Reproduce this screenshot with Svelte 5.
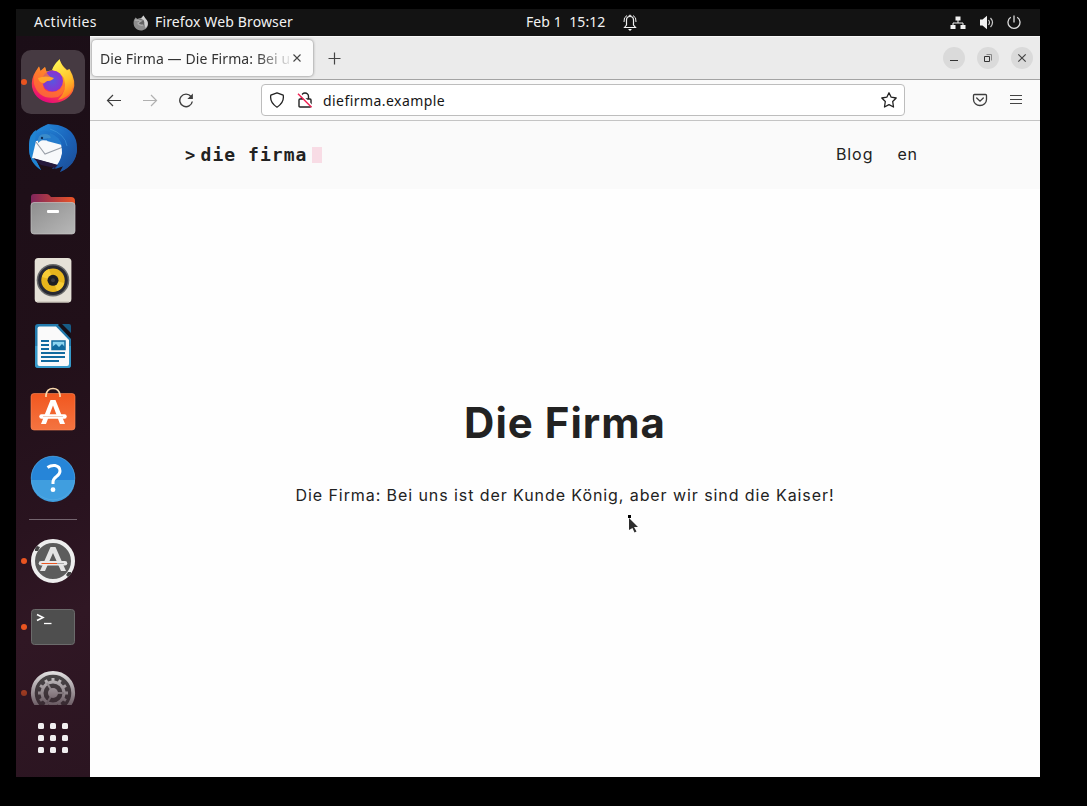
<script>
  const gearTeeth = Array.from({ length: 12 }, (_, i) => i * 30);
  const grid = Array.from({ length: 9 }, (_, i) => i);
</script>

<div class="screen">
  <div class="desktop">
    <header class="topbar">
      <span class="activities">Activities</span>
      <svg class="mini" width="16" height="16" viewBox="0 0 16 16">
        <path d="M1 5 2.500 2.500 4.500 4C6 3 7 3 8 3L10.500.5 12 3 14 5.500C17 12 12 15.500 8 15.500 2 15.500-.5 10 1 5Z" fill="#8d8d8d" />
        <path d="M8 4 10.500.5 12 3 14 5.500C16 9 14 12 12.500 13L11 7Z" fill="#d0d0d0" />
        <circle cx="8" cy="7.500" r="3.200" fill="#636363" />
        <path d="M2 5 8 6 5 8Q6 11 10 10" stroke="#aaa" stroke-width="1.500" fill="none" />
      </svg>
      <span class="appname">Firefox Web Browser</span>
      <span class="clock">Feb 1&nbsp; 15:12</span>
      <svg class="bell" width="16" height="18" viewBox="0 0 16 18" fill="none" stroke="#f2f2f2">
        <path d="M2.500 13.500 4.500 11V6Q4.500 2.500 8 2.500T11.500 6V11L13.500 13.500Z" stroke-width="1.200" />
        <path d="M2 8Q1.500 3 5 1.500M14 8Q14.500 3 11 1.500M6.500 2 8 1 9.500 2" stroke-width="1" />
        <path d="M6 15H10L8 17Z" fill="#fff" stroke="none" />
      </svg>
      <svg class="net" width="16" height="16" viewBox="0 0 16 16">
        <path d="M5.500 1.500h5v4h-5zM.5 10h5v4h-5zM10.500 10h5v4h-5z" fill="#f2f2f2" />
        <path d="M8 5v3M3 10.500V8h10V10.500" fill="none" stroke="#f2f2f2" />
      </svg>
      <svg class="vol" width="16" height="16" viewBox="0 0 16 16">
        <path d="M1 4.500h2.500L8 .8v13.500l-4.500-3.800H1Z" fill="#f2f2f2" />
        <path d="M9.500 5Q11.500 7.500 9.500 10M11.500 3Q15.500 7.500 11.500 12" fill="none" stroke="#ccc" stroke-width="1.200" />
      </svg>
      <svg class="power" width="16" height="16" viewBox="0 0 16 16" fill="none" stroke="#ddd" stroke-width="1.300">
        <path d="M4.800 2.300A6 6 0 1 0 11.200 2.300M8 .5v7" />
      </svg>
    </header>

    <div class="workspace">
      <nav class="dock">
        <div class="tile active">
          <svg viewBox="0 0 64 64">
            <defs>
              <linearGradient id="fire" x1=".8" y1="0" x2=".35" y2="1">
                <stop offset="0" stop-color="#fff04a" /><stop offset=".38" stop-color="#ff9c22" />
                <stop offset=".68" stop-color="#ff463f" /><stop offset="1" stop-color="#e4087d" />
              </linearGradient>
              <linearGradient id="flame" x1=".4" y1="0" x2=".7" y2="1">
                <stop offset="0" stop-color="#fff552" /><stop offset=".55" stop-color="#ffc22a" /><stop offset="1" stop-color="#ff711f" />
              </linearGradient>
              <radialGradient id="globe"><stop offset="0" stop-color="#5857df" /><stop offset="1" stop-color="#8b31cf" /></radialGradient>
            </defs>
            <path d="M15 21 18 16.500 19.500 21 24 17 25.500 21.500Q30 20 32 20.500L38.500 9Q40 15 46 20L48.500 19Q56 32 52 41C44 58 15 57 11 37Q10 28 15 21Z" fill="url(#fire)" />
            <path d="M31 20Q33 14 38.500 9.500 40 16 46 21L48 20Q55 32 50 42 46 48 37 50 47 40 43 28 39 22 31 20Z" fill="url(#flame)" />
            <ellipse cx="31.500" cy="31" rx="10.500" ry="10.500" fill="url(#globe)" />
            <path d="M15 21 18 16.500 19.500 21 24 17 25.500 22Q27 26 32 28 31 31 26 31L22 34Q22 42 31 42 39 42 42 35 46 41 37 47 18 51 13 34Q12 26 15 21Z" fill="#ff7d2c" opacity=".72" />
            <path d="M17 28Q25 25 33 28 31 31 26 31L23 33Q18 33 17 28Z" fill="#ffa52b" />
          </svg>
          <i class="dot"></i>
        </div>

        <div class="tile">
          <svg viewBox="0 0 64 64">
            <defs><linearGradient id="bird" x1="0" y1="0" x2="1" y2="1">
              <stop offset="0" stop-color="#248bdb" /><stop offset=".5" stop-color="#1b66bd" /><stop offset="1" stop-color="#1c4990" />
            </linearGradient></defs>
            <path d="M27 8 37 9Q56 14 56 32 56 48 39 56L42 50 31 53Q34 50 34 48L14 43 20 54Q8 46 8 32 8 16 23 10Z" fill="url(#bird)" />
            <path d="M8 29Q8 18 15 14L13 40 20 54Q7 46 8 29Z" fill="#2084d2" />
            <path d="M15 25Q25 23 41 27L42 34Q40 44 36 49L11 42Z" fill="#f8f9fb" />
            <path d="M15 26 24 38 42 31" fill="none" stroke="#999fa8" stroke-width="1.100" />
            <path d="M12 42 37 49 34 52 20 49Z" fill="#25183b" />
            <path d="M16 17Q22 12 29 16 41 20 41 37 40 47 34 53L43 50 39 56Q56 49 56 32 51 38 52 27 49 32 49 19 37 9 26 9Q18 12 16 17Z" fill="url(#bird)" />
            <path d="M29 17Q38 20 41 29L26 25Z" fill="#247bcc" />
            <path d="M17 27Q16 18 24 18 29 18 30 22L22 23Z" fill="#3b8ccb" />
            <circle cx="21" cy="22" r="1.200" fill="#102c54" />
            <path d="M29 13Q44 18 46 30" fill="none" stroke="#47a1e1" stroke-width="1" opacity=".5" />
          </svg>
        </div>

        <div class="tile">
          <svg viewBox="0 0 64 64">
            <defs>
              <linearGradient id="folder"><stop offset="0" stop-color="#80255b" /><stop offset="1" stop-color="#eb5526" /></linearGradient>
              <linearGradient id="drawer" x1="0" y1="0" x2="1" y2="1"><stop offset="0" stop-color="#8e8e8e" /><stop offset="1" stop-color="#b8b8b8" /></linearGradient>
            </defs>
            <path d="M10 28V15q0-3 3-3h13q2 0 4 3h20q4 0 4 4v9Z" fill="url(#folder)" />
            <rect x="10" y="20.500" width="44" height="31.500" rx="3" fill="url(#drawer)" stroke="#c4c4c4" stroke-width=".7" />
            <rect x="26" y="28" width="12" height="3" rx="1" fill="#fff" />
          </svg>
        </div>

        <div class="tile">
          <svg viewBox="0 0 64 64">
            <rect x="13.700" y="10" width="36.700" height="44.500" rx="3.500" fill="#e5e1d7" />
            <path d="M16 54H48" stroke="#beb9ae" />
            <circle cx="32" cy="32.300" r="16.300" fill="#686969" /><circle cx="32" cy="32.300" r="14.800" fill="#272933" />
            <circle cx="32" cy="32.300" r="11.700" fill="#e7b51c" />
            <path d="M32 32 21 29Q22 23 28 21ZM32 32 43 35Q42 41 36 43Z" fill="#f6cc36" />
            <circle cx="32" cy="32.300" r="5.500" fill="#1d1e22" /><circle cx="32" cy="32.300" r="2" fill="#38393f" />
          </svg>
        </div>

        <div class="tile">
          <svg viewBox="0 0 64 64">
            <path d="M17 10h20l13 14v27q0 3-3 3H17q-3 0-3-3V13q0-3 3-3Z" fill="#237bad" />
            <path d="M14 32H50V51q0 3-3 3H17q-3 0-3-3Z" fill="#369aca" />
            <path d="M18.500 12.500H35L48 26V50q0 2-2 2H18.500q-2 0-2-2V14.500q0-2 2-2Z" fill="#fafafa" />
            <path d="M37 11 50 25V20L41 10Z" fill="#161018" /><path d="M41 10H48q2 0 2 2v7Z" fill="#175c86" />
            <path d="M20 27h8M20 31h8M20 35h8M20 39h24M20 43h24M20 47h18" stroke="#126b9f" stroke-width="2" />
            <rect x="31" y="27" width="13" height="8.500" fill="#8dd5f1" stroke="#126b9f" stroke-width="1.500" />
            <path d="M31 35V33L35 30 38 33 41 30 44 33V35Z" fill="#126b9f" />
          </svg>
        </div>

        <div class="tile">
          <svg viewBox="0 0 64 64">
            <defs><linearGradient id="bag" x1="0" y1="0" x2="0" y2="1"><stop offset="0" stop-color="#f1571f" /><stop offset="1" stop-color="#f47441" /></linearGradient></defs>
            <rect x="10" y="13.500" width="44" height="36.500" rx="3" fill="url(#bag)" stroke="#ff8a58" stroke-width=".6" />
            <path d="M25 17V15q1-6.500 7-6.500t7 6.500v2" fill="none" stroke="#fbd9ad" stroke-width="1.700" />
            <path d="M20 44 29.500 20H34.500L44 44H39L32 25.500 25 44Z" fill="#fff" />
            <path d="M20.500 36.500H43.500" stroke="#fff" stroke-width="4.500" stroke-linecap="round" /><path d="M22 36.500H42" stroke="#f3cdbb" stroke-width="1" />
          </svg>
        </div>

        <div class="tile">
          <svg viewBox="0 0 64 64">
            <circle cx="32" cy="32" r="22" fill="#2685d8" /><path d="M10 34H54A22 22 0 0 1 10 34Z" fill="#409edf" />
            <circle cx="32" cy="32" r="21.800" fill="none" stroke="#59ade3" stroke-width=".6" />
            <path d="M26.500 21.500Q30 19 34 19.500q5 1 5 5.500 0 3-3.500 5.500Q32 33 32 36v2" fill="none" stroke="#fff" stroke-width="3" />
            <circle cx="32" cy="43.700" r="2.400" fill="#fff" />
          </svg>
        </div>

        <hr />

        <div class="tile">
          <svg viewBox="0 0 64 64">
            <circle cx="32" cy="32" r="20" fill="#5c5c5c" stroke="#eee" stroke-width="4" />
            <path d="M14 20l2-3 3 1-2 4-3 0ZM47 43h3v2l-3 3-2-2Z" fill="#454545" />
            <path d="M19 42 29.500 18H34.500L45 42H40L32 24 24 42Z" fill="#e4e4e4" />
            <path d="M20 34.300H44" stroke="#e8e8e8" stroke-width="4.500" stroke-linecap="round" /><path d="M20.500 34.500H36" stroke="#e95420" stroke-width="1" /><path d="M36 34.500h7" stroke="#aaa" />
          </svg>
          <i class="dot"></i>
        </div>

        <div class="tile">
          <svg viewBox="0 0 64 64">
            <rect x="10.500" y="14.500" width="43" height="35" rx="3" fill="#4e4e4e" stroke="#6b6b6b" />
            <path d="M16 19.500 22 22.500 16 25.500" fill="none" stroke="#fff" stroke-width="1.600" /><path d="M23 28.500H30.500" stroke="#fff" stroke-width="1.300" />
          </svg>
          <i class="dot"></i>
        </div>

        <div class="tile cut">
          <svg viewBox="0 0 64 64">
            <circle cx="32" cy="32" r="20.200" fill="#4c4c4c" stroke="#e8e8e8" stroke-width="3.800" />
            <circle cx="32" cy="32" r="11" fill="none" stroke="#d8d8d8" stroke-width="3" />
            {#each gearTeeth as angle}
              <rect x="30.500" y="17" width="3" height="4" fill="#d8d8d8" transform="rotate({angle} 32 32)" />
            {/each}
            <path d="M32 32 26 22M32 32H43M32 32 26 42" stroke="#bbb" stroke-width="2" />
            <circle cx="32" cy="32" r="5" fill="#d2ced0" />
          </svg>
          <i class="dot"></i>
        </div>

        <div class="apps">{#each grid as cell (cell)}<i></i>{/each}</div>
      </nav>

      <section class="browser">
        <div class="tabs">
          <div class="tab">
            <span class="title">Die Firma — Die Firma: Bei u</span>
            <svg width="8" height="8" viewBox="0 0 8 8"><path d="M.5.5 7.500 7.500M7.500.5.5 7.500" stroke="#444" stroke-width="1.100" /></svg>
          </div>
          <svg class="plus" width="13" height="13" viewBox="0 0 13 13"><path d="M6.500.5v12M.5 6.500h12" stroke="#444" stroke-width="1.200" /></svg>
          <div class="controls">
            <span><svg viewBox="0 0 22 22"><path d="M7 13.500h8" stroke="#333" /></svg></span>
            <span><svg viewBox="0 0 22 22" fill="none"><path d="M9.500 7.500h5v6" stroke="#888" /><path d="M7.500 9.500h5v5h-5z" stroke="#333" /></svg></span>
            <span><svg viewBox="0 0 22 22"><path d="M7.300 7.300 14.700 14.700M14.700 7.300 7.300 14.700" stroke="#444" stroke-width="1.200" /></svg></span>
          </div>
        </div>

        <div class="toolbar">
          <svg class="back" width="16" height="16" viewBox="0 0 16 16" fill="none" stroke="#3d3d3d" stroke-width="1.200"><path d="M15 8.500H1.500M7 3 1.500 8.500 7 14" /></svg>
          <svg class="forward" width="16" height="16" viewBox="0 0 16 16" fill="none" stroke="#b0b0b0" stroke-width="1.200"><path d="M1 8.500h13.500M9 3 14.500 8.500 9 14" /></svg>
          <svg class="reload" width="16" height="16" viewBox="0 0 16 16" fill="none" stroke="#3d3d3d" stroke-width="1.400"><path d="M13 4.500A6.300 6.300 0 1 0 14.300 9.500" /><path d="M14.900 1.500v5.500H9.400Z" fill="#3d3d3d" stroke="none" /></svg>
          <div class="address">
            <svg width="16" height="16" viewBox="0 0 16 16" fill="none" stroke="#222" stroke-width="1.300"><path d="M8 .8 14.200 3.200Q15.500 10.500 8 15.200.5 10.500 1.800 3.200Z" stroke-linejoin="round" /></svg>
            <svg class="lock" width="16" height="16" viewBox="0 0 16 16" fill="none"><path d="M4.500 7V4.500a3.500 3.500 0 0 1 7 0V7M3 7h10q1 0 1 1v6q0 1-1 1H3q-1 0-1-1V8q0-1 1-1Z" stroke="#222" stroke-width="1.400" /><path d="M2.500 1.500 15 14" stroke="#fff" stroke-width="2" /><path d="M1 1.700 14.500 15.200" stroke="#f02052" stroke-width="1.400" /></svg>
            <span>diefirma.example</span>
            <svg class="star" width="16" height="16" viewBox="0 0 16 16" fill="none" stroke="#222" stroke-width="1.300" stroke-linejoin="round"><path d="M8 .8 10.200 5.200 15.200 6 11.700 9.500 12.500 15 8 12.600 3.500 15 4.300 9.500.8 6 5.800 5.200Z" /></svg>
          </div>
          <svg class="pocket" width="16" height="16" viewBox="0 0 16 16" fill="none" stroke="#3d3d3d" stroke-width="1.300"><path d="M2.500 2.500h11q1 0 1 1V7.500a6.500 6 0 0 1-13 0v-4q0-1 1-1Z" /><path d="M4.700 6 8 9.200 11.300 6" stroke-linecap="round" /></svg>
          <svg class="menu" width="12" height="12" viewBox="0 0 12 12"><path d="M0 1.500h12M0 5.500h12M0 9.500h12" stroke="#444" stroke-width="1.200" /></svg>
        </div>

        <div class="site-head">
          <div class="brand"><span class="prompt">&gt;</span><span class="name">die firma</span><i></i></div>
          <nav class="links"><span>Blog</span><span>en</span></nav>
        </div>
        <main>
          <h1>Die Firma</h1>
          <p>Die Firma: Bei uns ist der Kunde König, aber wir sind die Kaiser!</p>
          <svg class="pointer" width="12" height="20" viewBox="0 0 12 20"><path d="M1 4 10 13 6 13 8.500 17.500 6.500 18.500 4.500 14 1 16Z" fill="#2d2d2d" /><path d="M0 1h3v3H0Z" fill="#000" /></svg>
        </main>
      </section>
    </div>
  </div>
</div>

<style>
  :global(body) { margin: 0; background: #000; }
  * { box-sizing: border-box; }
  svg { flex: none; display: block; }
  .screen { width: 1087px; height: 806px; padding: 9px 0 0 16px; background: #000; overflow: hidden; font-family: "Noto Sans", sans-serif; }
  .desktop { width: 1024px; height: 768px; display: flex; flex-direction: column; }
  .topbar { height: 27px; flex: none; background: #131313; color: #f2f2f2; display: flex; align-items: center; font-size: 14px; line-height: 25px; white-space: pre; }
  .topbar span { height: 27px; }
  .activities { width: 63px; margin-left: 18px; letter-spacing: .47px; }
  .mini { margin-left: 36px; }
  .appname { margin-left: 6px; width: 138px; letter-spacing: .13px; }
  .clock { margin-left: 233px; width: 79px; letter-spacing: .08px; }
  .bell { margin-left: 17px; }
  .net { margin-left: 312px; }
  .vol { margin-left: 13px; }
  .power { margin-left: 11px; }

  .workspace { display: flex; flex: 1; min-height: 0; }
  .dock { width: 74px; padding: 14px 5px 0; display: flex; flex-direction: column; gap: 2px; background: linear-gradient(155deg, #1b0e17 0%, #211019 42%, #29131f 64%, #301724 78%, #2b1521 100%); }
  .tile { position: relative; width: 64px; height: 64px; flex: none; border-radius: 10px; }
  .tile svg { width: 64px; height: 64px; }
  .active { background: #463a42; }
  .dot { position: absolute; left: 0; top: 29px; width: 6px; height: 6px; border-radius: 50%; background: #e95420; }
  .cut { height: 44px; overflow: hidden; border-radius: 0; mask-image: linear-gradient(#000 20%, rgba(0, 0, 0, .35)); }
  hr { width: 48px; height: 1px; flex: none; border: 0; margin: 7px 8px; background: #74656f; }
  .apps { display: grid; grid-template-columns: repeat(3, 6px); gap: 6px; margin: 16px 0 0 17px; }
  .apps i { width: 6px; height: 6px; border-radius: 1.500px; background: #f0eeef; }

  .browser { width: 950px; display: flex; flex-direction: column; background: #fff; }
  .tabs { height: 44px; flex: none; display: flex; align-items: center; background: #ebebeb; border-top: 1px solid #fafafa; border-bottom: 1px solid #a3a3a3; }
  .tab { width: 221px; height: 36px; margin-left: 2px; padding: 0 12px 0 8px; display: flex; align-items: center; background: #fbfbfb; border-radius: 4px; box-shadow: 0 0 3px rgba(0, 0, 0, .5); }
  .title { width: 190px; margin-right: 3px; padding-top: 1px; white-space: nowrap; color: #333; font-size: 14px; line-height: 20px; letter-spacing: .1px; mask-image: linear-gradient(90deg, #000 82%, transparent 102%); }
  .plus { margin-left: 15px; margin-top: 1px; }
  .controls { margin-left: auto; margin-right: 7px; display: flex; gap: 12px; }
  .controls span { width: 22px; height: 22px; border-radius: 50%; background: #dadada; }
  .controls svg { width: 22px; height: 22px; }
  .toolbar { height: 41px; flex: none; display: flex; align-items: center; background: #fafafa; border-bottom: 1px solid #c4c4c4; }
  .back { margin-left: 16px; }
  .forward, .reload { margin-left: 20px; }
  .address { width: 644px; height: 32px; margin-left: 67px; padding: 0 7px; border: 1px solid #bdbdbd; border-radius: 4px; background: #fff; display: flex; align-items: center; color: #151515; font-size: 14px; }
  .lock { margin-left: 12px; }
  .address span { margin-left: 10px; letter-spacing: .44px; }
  .star { margin-left: auto; }
  .pocket { margin-left: 67px; }
  .menu { margin-left: 22px; }

  .site-head { height: 68px; flex: none; padding: 0 122px 0 95px; display: flex; justify-content: space-between; align-items: center; background: #fafafa; color: #222; }
  .brand { display: flex; align-items: center; font: 700 18px/24px "DejaVu Sans Mono", monospace; white-space: pre; }
  .prompt { width: 15.500px; font-size: 17px; }
  .name { width: 107.500px; letter-spacing: 1.050px; }
  .brand i { width: 10px; height: 16px; margin-left: 4px; background: #f8dce5; }
  .links { display: flex; gap: 24px; margin-bottom: 2px; font: 16px/24px Inter, sans-serif; letter-spacing: .92px; }
  main { position: relative; flex: 1; text-align: center; color: #222; font-family: Inter, sans-serif; background: #fefefe; }
  h1 { margin: 204px 0 0; font-size: 42px; line-height: 60px; font-weight: 700; letter-spacing: 1px; }
  p { margin: 30px 0 0; font-size: 16px; line-height: 24px; letter-spacing: .92px; white-space: nowrap; }
  .pointer { position: absolute; left: 538px; top: 325px; }
</style>
